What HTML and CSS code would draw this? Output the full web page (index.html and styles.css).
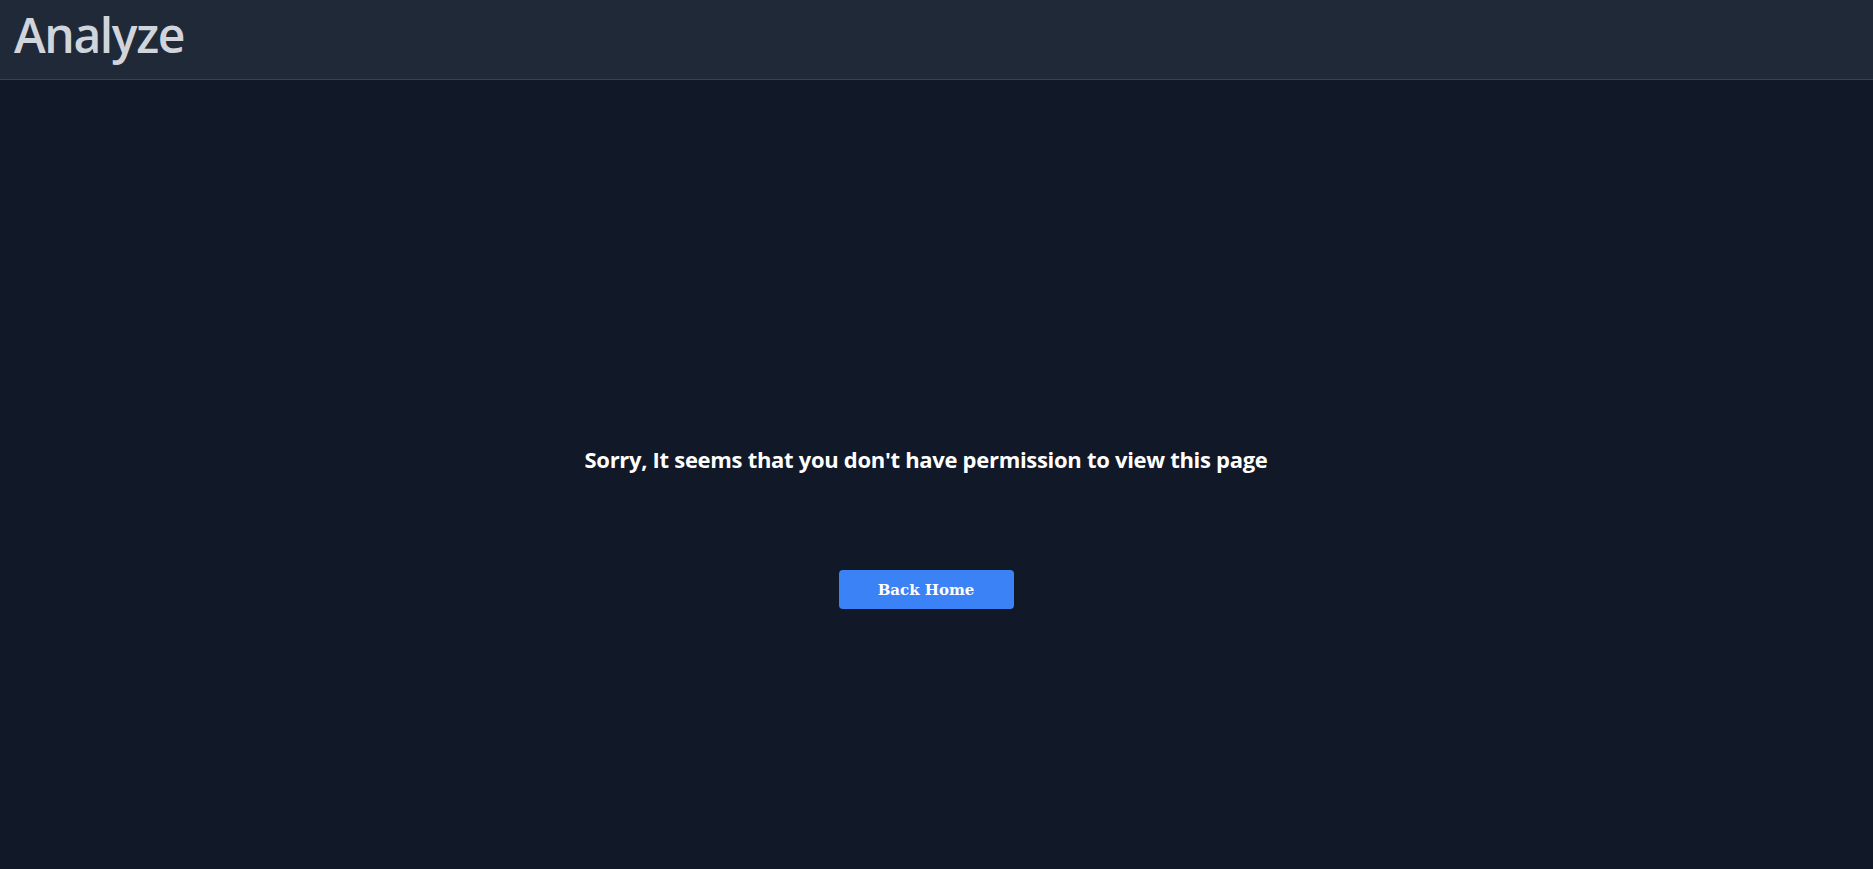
FILE: index.html
```html
<!DOCTYPE html>
<html lang="en">
<head>
<meta charset="utf-8">
<title>Analyze</title>
<link rel="stylesheet" href="styles.css">
</head>
<body>
<header class="topbar">
  <h1 class="brand">Analyze</h1>
</header>
<main class="content">
  <p class="message">Sorry, It seems that you don't have permission to view this page</p>
  <button class="back-btn" type="button">Back Home</button>
</main>
</body>
</html>
```

FILE: styles.css
```css
html, body {
  margin: 0;
  padding: 0;
  height: 100%;
}
body {
  background: #111827;
  font-family: "Open Sans", "Noto Sans", sans-serif;
  display: flex;
  flex-direction: column;
}
.topbar {
  height: 79px;
  background: #1f2937;
  border-bottom: 1px solid #374151;
  display: flex;
  align-items: center;
  padding-left: 14px;
  box-sizing: content-box;
}
.brand {
  margin: 0;
  font-size: 48px;
  font-weight: 600;
  letter-spacing: -1.4px;
  color: #d1d5db;
  line-height: 1;
  position: relative;
  top: -5px;
}
.content {
  flex: 1;
  display: flex;
  flex-direction: column;
  align-items: center;
  padding-top: 363px;
  padding-right: 21px;
}
.message {
  margin: 0;
  color: #ffffff;
  font-size: 22px;
  font-weight: 700;
  letter-spacing: -0.3px;
  line-height: 32px;
}
.back-btn {
  margin-top: 95px;
  width: 175px;
  height: 39px;
  background: #3b82f6;
  border: none;
  border-radius: 4px;
  color: #ffffff;
  font-family: "DejaVu Serif", serif;
  font-weight: 700;
  font-size: 15px;
}
```
